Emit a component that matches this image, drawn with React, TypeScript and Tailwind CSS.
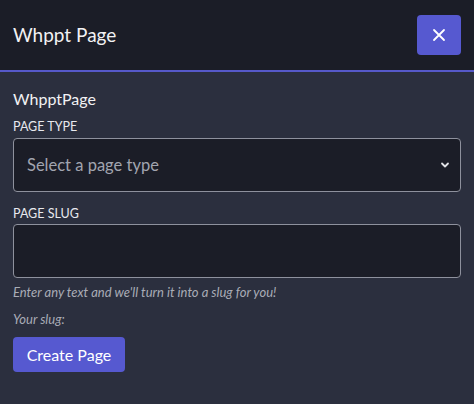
import React from "react";

export default function App() {
  return (
    <div className="w-[474px] h-[404px] bg-[#2b2f3e] text-white flex flex-col" style={{ fontFamily: "Lato, 'Noto Sans', sans-serif" }}>
      <div className="h-[72px] bg-[#1b1d27] flex items-center justify-between pl-[13px] pr-[13px] border-b-2 border-[#5659c9]">
        <span className="text-[19px] text-[#f2f2f4] mt-[1px]">Whppt Page</span>
        <button className="w-[44px] h-[40px] bg-[#5659d0] rounded-[4px] flex items-center justify-center">
          <svg width="14" height="14" viewBox="0 0 14 14" fill="none" stroke="white" strokeWidth="1.8" strokeLinecap="round">
            <path d="M2 2L12 12M12 2L2 12" />
          </svg>
        </button>
      </div>
      <div className="px-[13px] pt-[17px] flex flex-col">
        <div className="text-[16px] leading-[20px] text-[#f2f2f4]">WhpptPage</div>
        <div className="text-[12.5px] leading-[14px] mt-[11px] text-[#e8e9ee]">PAGE TYPE</div>
        <div className="mt-[4px] h-[54px] bg-[#1b1d27] border border-[#8e919d] rounded-[4px] flex items-center justify-between pl-[13px] pr-[10px]">
          <span className="text-[16.5px] text-[#a2a5b0]">Select a page type</span>
          <svg width="10" height="8" viewBox="0 0 10 8" fill="none" stroke="#e0e1e6" strokeWidth="1.8" strokeLinecap="round" strokeLinejoin="round">
            <path d="M2 2.5L5 5.5L8 2.5" />
          </svg>
        </div>
        <div className="text-[12.5px] leading-[14px] mt-[15px] text-[#e8e9ee]">PAGE SLUG</div>
        <div className="mt-[3px] h-[54px] bg-[#1b1d27] border border-[#8e919d] rounded-[4px]"></div>
        <div className="text-[13px] italic text-[#a9acb6] mt-[6px] leading-[16px]">Enter any text and we'll turn it into a slug for you!</div>
        <div className="text-[13px] italic text-[#a9acb6] mt-[11px] leading-[16px]">Your slug:</div>
        <div className="mt-[10px]">
          <button className="h-[35px] w-[112px] bg-[#5659d0] rounded-[4px] text-[16px] text-white">Create Page</button>
        </div>
      </div>
    </div>
  );
}
